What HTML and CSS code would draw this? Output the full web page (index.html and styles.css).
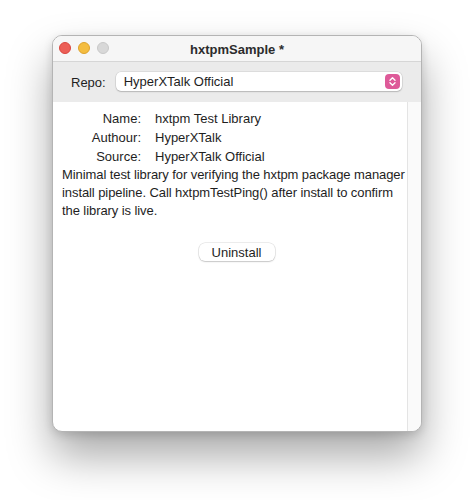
FILE: index.html
```html
<!DOCTYPE html>
<html>
<head>
<meta charset="utf-8">
<title>hxtpmSample *</title>
<link rel="stylesheet" href="styles.css">
</head>
<body>
<div class="window">
  <div class="titlebar">
    <div class="lights">
      <span class="light close"></span>
      <span class="light minimize"></span>
      <span class="light zoom"></span>
    </div>
    <div class="title">hxtpmSample *</div>
  </div>
  <div class="toolbar">
    <span class="repo-label">Repo:</span>
    <div class="popup">
      <span class="popup-value">HyperXTalk Official</span>
      <span class="stepper">
        <svg width="15" height="15" viewBox="0 0 15 15">
          <path d="M5 6.2 L7.5 3.8 L10 6.2" fill="none" stroke="#fff" stroke-width="1.4" stroke-linecap="round" stroke-linejoin="round"/>
          <path d="M5 8.8 L7.5 11.2 L10 8.8" fill="none" stroke="#fff" stroke-width="1.4" stroke-linecap="round" stroke-linejoin="round"/>
        </svg>
      </span>
    </div>
  </div>
  <div class="content">
    <div class="main">
      <div class="details">
        <span class="key">Name:</span><span class="val">hxtpm Test Library</span>
        <span class="key">Authour:</span><span class="val">HyperXTalk</span>
        <span class="key">Source:</span><span class="val">HyperXTalk Official</span>
      </div>
      <p class="desc">Minimal test library for verifying the hxtpm package manager install pipeline. Call hxtpmTestPing() after install to confirm the library is live.</p>
      <div class="actions">
        <button class="btn">Uninstall</button>
      </div>
    </div>
    <div class="scrolltrack"></div>
  </div>
</div>
</body>
</html>
```
FILE: styles.css
```css
html, body {
  margin: 0;
  padding: 0;
  background: #ffffff;
}

body {
  font-family: "Liberation Sans", Arial, sans-serif;
  font-size: 13px;
  color: #1e1e1e;
  padding: 35px 0 0 52px;
  min-height: 500px;
  box-sizing: border-box;
}

.window {
  width: 370px;
  height: 397px;
  box-sizing: border-box;
  border-radius: 10px;
  border: 1px solid #b4b4b4;
  background: #ffffff;
  box-shadow: 0 24px 44px rgba(0, 0, 0, 0.34), 0 3px 10px rgba(0, 0, 0, 0.14);
  display: flex;
  flex-direction: column;
  overflow: hidden;
}

.titlebar {
  height: 25px;
  flex: none;
  background: #f6f6f6;
  border-bottom: 1px solid #d6d6d6;
  display: flex;
  align-items: center;
  justify-content: center;
  position: relative;
}

.lights {
  position: absolute;
  left: 6px;
  top: 6px;
  display: flex;
  gap: 7px;
}

.light {
  width: 12px;
  height: 12px;
  border-radius: 50%;
  box-sizing: border-box;
}

.close { background: #ec5f57; border: 0.5px solid #d9473f; }
.minimize { background: #f4bd40; border: 0.5px solid #dca22e; }
.zoom { background: #d8d8d8; border: 0.5px solid #c8c8c8; }

.title {
  font-weight: bold;
  font-size: 13px;
  color: #2c2c2c;
  padding-top: 1px;
}

.toolbar {
  height: 40px;
  flex: none;
  background: #ebebeb;
  display: flex;
  align-items: center;
  padding: 0 19px 0 18px;
  gap: 10px;
  box-sizing: border-box;
}

.repo-label {
  color: #1e1e1e;
}

.popup {
  flex: 1;
  height: 19px;
  background: #ffffff;
  border-radius: 5px;
  box-shadow: 0 0 0 0.5px rgba(0, 0, 0, 0.12), 0 1px 1.5px rgba(0, 0, 0, 0.18);
  display: flex;
  align-items: center;
  justify-content: space-between;
  padding: 0 2px 0 8px;
  margin-top: -1px;
}

.stepper {
  width: 15px;
  height: 15px;
  border-radius: 4px;
  background: #de5a99;
  display: flex;
}

.content {
  flex: 1;
  display: flex;
  min-height: 0;
}

.main {
  flex: 1;
  padding: 7px 1px 0 9px;
}

.details {
  display: grid;
  grid-template-columns: 79px auto;
  column-gap: 14px;
  row-gap: 0;
  line-height: 19px;
}

.key {
  text-align: right;
}

.desc {
  margin: 0;
  line-height: 18px;
  letter-spacing: -0.08px;
}

.actions {
  display: flex;
  justify-content: center;
  padding-top: 23px;
  padding-left: 5px;
}

.btn {
  font-family: inherit;
  font-size: 13px;
  color: #1e1e1e;
  background: #ffffff;
  border: none;
  border-radius: 6px;
  height: 18px;
  width: 76px;
  padding: 0;
  box-shadow: 0 0 0 0.5px rgba(0, 0, 0, 0.14), 0 1px 1.5px rgba(0, 0, 0, 0.16);
}

.scrolltrack {
  width: 13px;
  flex: none;
  background: #fafafa;
  border-left: 1px solid #e4e4e4;
}
```
